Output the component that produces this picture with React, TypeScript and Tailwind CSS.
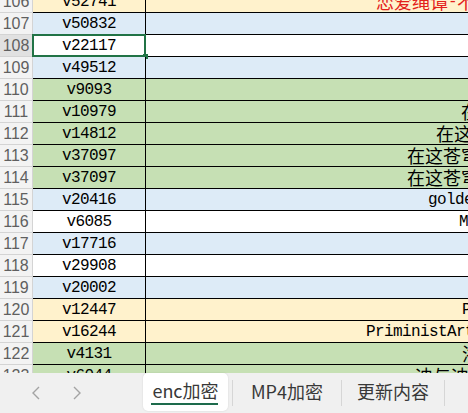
import React from "react";

type Row = {
  n: number;
  b: string;
  bg: string;
  c?: string;
  pl?: string;
  red?: boolean;
  sel?: boolean;
};

const rows: Row[] = [
  { n: 106, b: "v52741", bg: "bg-[#fff2cc]", c: "恋爱绳谭-不", pl: "pl-[230px]", red: true },
  { n: 107, b: "v50832", bg: "bg-[#ddebf7]" },
  { n: 108, b: "v22117", bg: "bg-white", sel: true },
  { n: 109, b: "v49512", bg: "bg-[#ddebf7]" },
  { n: 110, b: "v9093", bg: "bg-[#c6e0b4]" },
  { n: 111, b: "v10979", bg: "bg-[#c6e0b4]", c: "在这苍穹", pl: "pl-[315px]" },
  { n: 112, b: "v14812", bg: "bg-[#c6e0b4]", c: "在这苍穹", pl: "pl-[290px]" },
  { n: 113, b: "v37097", bg: "bg-[#c6e0b4]", c: "在这苍穹", pl: "pl-[261px]" },
  { n: 114, b: "v37097", bg: "bg-[#c6e0b4]", c: "在这苍穹", pl: "pl-[261px]" },
  { n: 115, b: "v20416", bg: "bg-[#ddebf7]", c: "golden", pl: "pl-[282px]" },
  { n: 116, b: "v6085", bg: "bg-white", c: "MV", pl: "pl-[313px]" },
  { n: 117, b: "v17716", bg: "bg-[#ddebf7]" },
  { n: 118, b: "v29908", bg: "bg-white" },
  { n: 119, b: "v20002", bg: "bg-[#ddebf7]" },
  { n: 120, b: "v12447", bg: "bg-[#fff2cc]", c: "PP", pl: "pl-[316px]" },
  { n: 121, b: "v16244", bg: "bg-[#fff2cc]", c: "PriministArt", pl: "pl-[220px]" },
  { n: 122, b: "v4131", bg: "bg-[#c6e0b4]", c: "浴浴", pl: "pl-[316px]" },
  { n: 123, b: "v6044", bg: "bg-[#c6e0b4]", c: "迪与迪与", pl: "pl-[269px]" },
];

function Mixed({ text }: { text: string }) {
  const parts = text.match(/[\u3000-\u9fff\uff00-\uffef]+|[^\u3000-\u9fff\uff00-\uffef]+/g) || [];
  return (
    <>
      {parts.map((p, i) =>
        /[\u3000-\u9fff]/.test(p) ? (
          <span key={i} className="text-[18px] [font-family:'Noto_Sans_CJK_SC',sans-serif]">
            {p}
          </span>
        ) : (
          <span key={i} className="text-[16px] tracking-[-0.6px] [font-family:'Liberation_Mono',monospace]">
            {p}
          </span>
        )
      )}
    </>
  );
}

function Chevron({ dir }: { dir: "l" | "r" }) {
  return (
    <svg width="10" height="16" viewBox="0 0 10 16" fill="none">
      <path
        d={dir === "l" ? "M8 2 L2 8 L8 14" : "M2 2 L8 8 L2 14"}
        stroke="#a3a3a3"
        strokeWidth="1.4"
      />
    </svg>
  );
}

export default function App() {
  return (
    <div className="w-[468px] h-[413px] overflow-hidden flex flex-col bg-white">
      <div className="h-[373px] overflow-hidden relative">
        <div className="-mt-[9px] flex flex-col">
          {rows.map((r) => (
            <div key={r.n} className="flex h-[22px] shrink-0">
              <div
                className={`w-[33px] shrink-0 border-r border-b border-[#d4d4d4] flex items-center justify-center text-[16px] text-[#5f5f5f] [font-family:'Liberation_Sans',sans-serif] ${
                  r.sel ? "bg-[#e1e1e1]" : "bg-[#f3f3f3]"
                }`}
              >
                {r.n}
              </div>
              <div
                className={`w-[113px] shrink-0 border-r border-b border-black flex items-center justify-center text-[16px] tracking-[-0.6px] text-black [font-family:'Liberation_Mono',monospace] relative ${r.bg}`}
              >
                {r.b}
                {r.sel && (
                  <>
                    <div className="absolute left-[-1px] top-[-1px] right-[-1px] bottom-[-1px] border-2 border-[#217346]" />
                    <div className="absolute right-[-3px] bottom-[-3px] w-[5px] h-[5px] bg-[#217346]" />
                  </>
                )}
              </div>
              <div
                className={`flex-1 min-w-0 border-b border-black flex items-center whitespace-nowrap overflow-hidden ${r.bg} ${
                  r.red ? "text-[#e3211c]" : "text-black"
                } ${r.pl ?? ""}`}
              >
                {r.c && <Mixed text={r.c} />}
              </div>
            </div>
          ))}
        </div>
      </div>
      <div className="h-[40px] shrink-0 bg-[#f0f0f0] flex items-center [font-family:'Noto_Sans_CJK_SC',sans-serif] text-[18px] text-[#383838]">
        <div className="w-[143px] flex items-center pl-[31px] gap-[31px] shrink-0">
          <Chevron dir="l" />
          <Chevron dir="r" />
        </div>
        <div className="h-[38px] -mt-[2px] w-[85px] bg-white rounded-[5px] shadow-[0_0_2px_rgba(0,0,0,0.12)] flex flex-col items-center justify-center relative shrink-0">
          <span className="leading-none -mt-[4px]">enc加密</span>
          <div className="absolute left-[8px] right-[10px] bottom-[6px] h-[2px] bg-[#1d6b4c]" />
        </div>
        <div className="w-px h-[26px] bg-[#d6d6d6] ml-[4px] shrink-0" />
        <div className="px-[18px] leading-none -mt-[4px] shrink-0">MP4加密</div>
        <div className="w-px h-[26px] bg-[#d6d6d6] shrink-0" />
        <div className="px-[15px] leading-none -mt-[4px] shrink-0">更新内容</div>
        <div className="w-px h-[26px] bg-[#d6d6d6] shrink-0" />
      </div>
    </div>
  );
}
